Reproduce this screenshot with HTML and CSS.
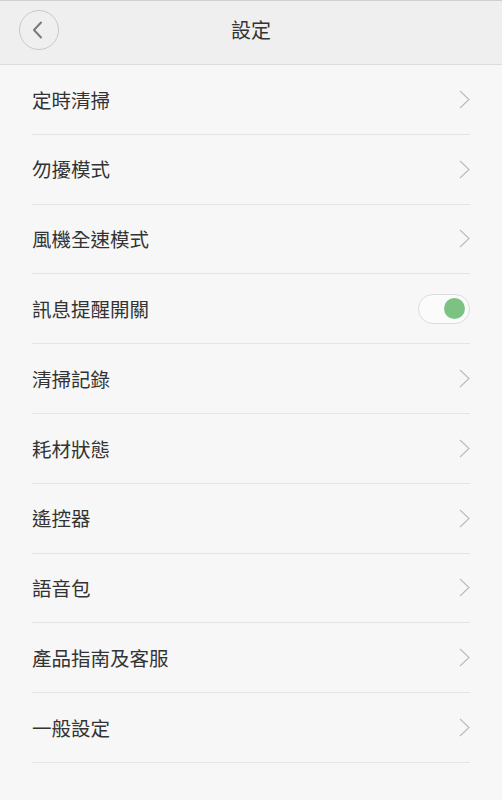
FILE: index.html
```
<!DOCTYPE html>
<html lang="zh-Hant">
<head>
<meta charset="utf-8">
<link rel="stylesheet" href="styles.css">
</head>
<body>
<div class="page">
  <header class="header">
    <button class="back" aria-label="返回">
      <svg width="12" height="18" viewBox="0 0 12 18"><path d="M10 1.5 L3 9 L10 16.5" fill="none" stroke="#7a7a7a" stroke-width="2" stroke-linecap="round" stroke-linejoin="round"/></svg>
    </button>
    <h1 class="title">設定</h1>
  </header>
  <ul class="list">
    <li class="row"><span class="label">定時清掃</span><svg class="chev" viewBox="0 0 11 19"><path d="M1 1 L10 9.5 L1 18"/></svg></li>
    <li class="row"><span class="label">勿擾模式</span><svg class="chev" viewBox="0 0 11 19"><path d="M1 1 L10 9.5 L1 18"/></svg></li>
    <li class="row"><span class="label">風機全速模式</span><svg class="chev" viewBox="0 0 11 19"><path d="M1 1 L10 9.5 L1 18"/></svg></li>
    <li class="row"><span class="label">訊息提醒開關</span><span class="toggle on"><span class="knob"></span></span></li>
    <li class="row"><span class="label">清掃記錄</span><svg class="chev" viewBox="0 0 11 19"><path d="M1 1 L10 9.5 L1 18"/></svg></li>
    <li class="row"><span class="label">耗材狀態</span><svg class="chev" viewBox="0 0 11 19"><path d="M1 1 L10 9.5 L1 18"/></svg></li>
    <li class="row"><span class="label">遙控器</span><svg class="chev" viewBox="0 0 11 19"><path d="M1 1 L10 9.5 L1 18"/></svg></li>
    <li class="row"><span class="label">語音包</span><svg class="chev" viewBox="0 0 11 19"><path d="M1 1 L10 9.5 L1 18"/></svg></li>
    <li class="row"><span class="label">產品指南及客服</span><svg class="chev" viewBox="0 0 11 19"><path d="M1 1 L10 9.5 L1 18"/></svg></li>
    <li class="row"><span class="label">一般設定</span><svg class="chev" viewBox="0 0 11 19"><path d="M1 1 L10 9.5 L1 18"/></svg></li>
  </ul>
</div>
</body>
</html>
```
FILE: styles.css
```
* { box-sizing: border-box; }
html, body { margin: 0; padding: 0; }
body {
  background: #f7f7f7;
  font-family: "Noto Sans CJK TC", "Noto Sans", sans-serif;
  color: #333;
}
.page { width: 502px; min-height: 800px; background: #f7f7f7; }
.header {
  height: 65px;
  background: #efefef;
  border-top: 1px solid #cfcfcf;
  border-bottom: 1px solid #dcdcdc;
  display: flex;
  align-items: center;
  justify-content: center;
  position: relative;
}
.back {
  position: absolute;
  left: 19px;
  top: 9px;
  width: 40px;
  height: 40px;
  border-radius: 50%;
  border: 1px solid #c9c9c9;
  background: transparent;
  padding: 0 4px 0 0;
  display: flex;
  align-items: center;
  justify-content: center;
}
.title {
  margin: 0;
  font-size: 20px;
  font-weight: 400;
  color: #333;
  line-height: 1;
  margin-top: -6px;
}
.list { list-style: none; margin: 0; padding: 0 32px; }
.row {
  height: 69.8px;
  border-bottom: 1px solid #e4e4e4;
  display: flex;
  align-items: center;
  justify-content: space-between;
}
.label { font-size: 19.5px; line-height: 1; color: #333; }
.chev {
  width: 11px;
  height: 19px;
  fill: none;
  stroke: #bdbdbd;
  stroke-width: 1.2;
  margin-right: 0;
}
.toggle {
  width: 52px;
  height: 30px;
  border: 1px solid #dcdcdc;
  border-radius: 15px;
  background: #fbfbfb;
  display: flex;
  align-items: center;
  justify-content: flex-end;
  padding-right: 4px;
}
.knob {
  width: 21px;
  height: 21px;
  border-radius: 50%;
  background: #7cc383;
}
```
